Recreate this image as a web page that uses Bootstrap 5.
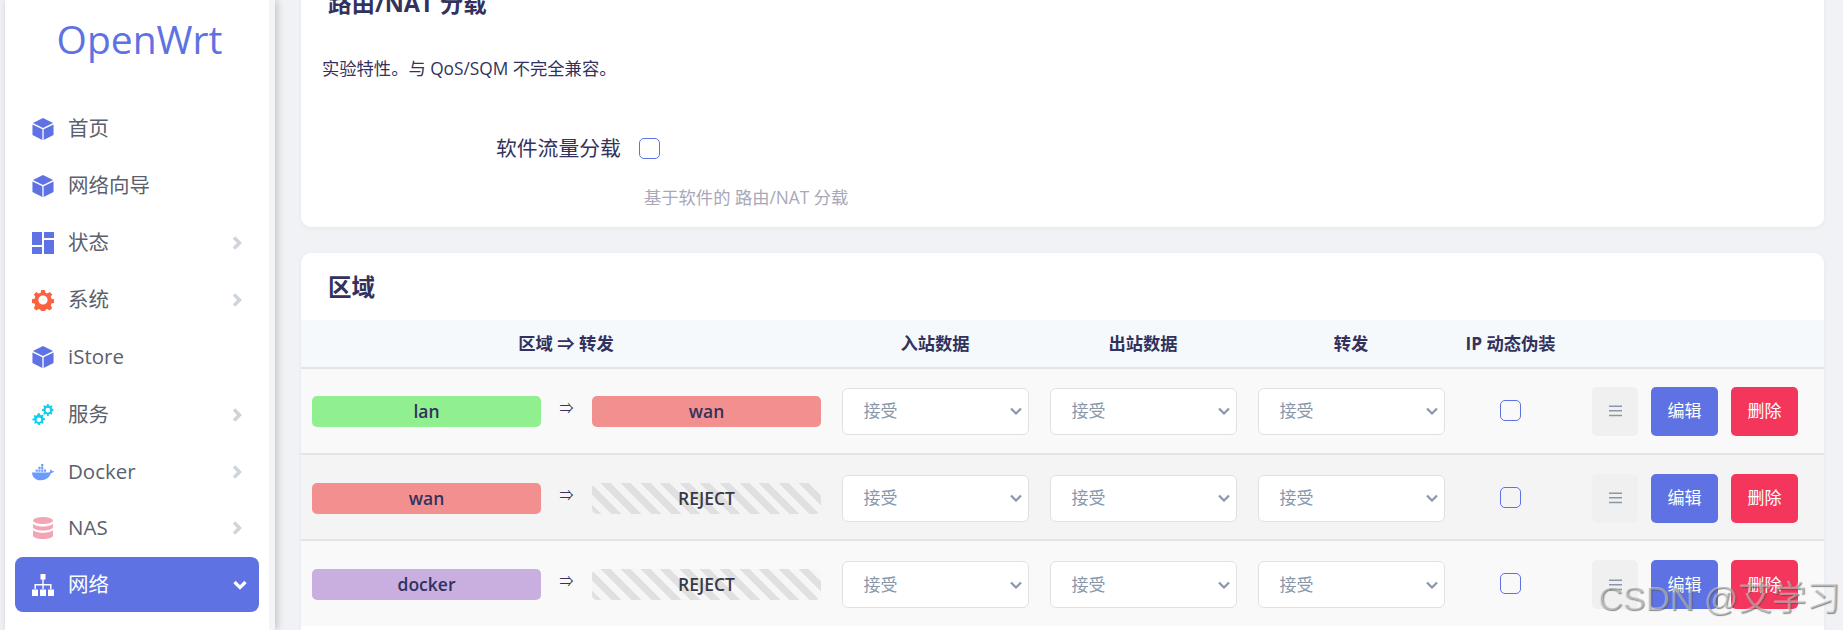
<!DOCTYPE html>
<html lang="zh"><head><meta charset="utf-8"><title>OpenWrt</title>
<link href="https://cdn.jsdelivr.net/npm/bootstrap@5.3.0/dist/css/bootstrap.min.css" rel="stylesheet">
<style>
html,body{height:630px;overflow:hidden}
body{background:#f1f2f5;font-family:"Open Sans","Noto Sans CJK SC",sans-serif;color:#32325d}
.shell{height:630px;overflow:hidden;padding-left:5px}
.side{width:270px;flex:none;height:630px;background:#fff;border-right:6px solid #f4f5f7;box-shadow:2px 0 8px rgba(0,0,0,.2);overflow:hidden;z-index:2}
.brand{font-size:39px;line-height:49px;color:#5e72e4;text-align:center;padding-top:14px;height:100px;padding-left:5px}
.menu{padding:0 10px;margin:0;list-style:none}
.mitem{height:57px;display:flex;align-items:center;padding:0 17px 0 17px;font-size:20.500px;color:#5b5f6e;border-radius:8px}
.mitem svg.ic{width:22px;height:22px;margin-right:14px;flex:none}
.mitem .chev{margin-left:auto;width:10px;height:14px;color:#ced4da}
.mitem.on{background:#5e72e4;color:#fff;height:55px;margin-top:1px}
.mitem.on .chev{width:14px;height:10px;color:#fff;margin-right:-5px}
.mitem.sub{height:58px;padding-left:53px;font-size:20px;border-radius:0}
.page{flex:1;min-width:0;padding:0 19px 0 26px;margin-top:-22px}
.pane{background:#fff;border:0;border-radius:10px;box-shadow:0 1px 4px rgba(50,50,93,.06)}
.pane-a{height:249px;padding:0 21px;margin-bottom:26px}
.ttl{font-size:23.500px;font-weight:700;line-height:30px;color:#32325d;margin:0}
.pane-a .ttl{padding:10px 6px 0}
.desc{font-size:17.300px;line-height:24px;margin:39px 0 0}
.frow{margin-top:54px;font-size:20.800px;display:flex;align-items:center;padding-left:174px;height:27px}
.box{appearance:none;-webkit-appearance:none;display:block;width:21px;height:21px;margin:0;border:1px solid #5e72e4;border-radius:5px;background:transparent}
.frow .box{margin-left:18px}
.hint{font-size:17.300px;color:#a8a8b9;line-height:24px;margin:24px 0 0 322px}
.pane-b{overflow:hidden;height:500px}
.pane-b .ttl{padding:19px 27px 18px}
.zones{table-layout:fixed;width:1523px;margin:0;border-collapse:collapse}
.zones th{background:#f6f9fc;height:48px;font-size:17.300px;font-weight:700;text-align:center;padding:0;color:#32325d;border-bottom:2px solid #e3e4e8;vertical-align:middle;box-shadow:none}
.zones td{height:86px;padding:0;border:0;border-bottom:2px solid #e3e4e8;vertical-align:middle;background:#f9f9f9;box-shadow:none;color:#32325d}
.zones tr.alt td,.zones tr.last td{padding-top:2px}
.zones tr.alt td{background:#f4f4f4}
.zones tr.last td{border-bottom:0}
.zcell{display:flex;align-items:center;padding:0 10px 0 11px}
.tagz{flex:none;width:229px;height:31px;line-height:31px;text-align:center;font-size:17.500px;font-weight:600;border-radius:5px;color:#32325d}
.g{background:#90f090}.r{background:#f29090}.p{background:#c9aee0}
.x{color:#3a3a46;background:repeating-linear-gradient(45deg,#e0e0e0 0 7px,#f4f4f4 7px 14px)}
tr.last .x{background:repeating-linear-gradient(45deg,#e0e0e0 0 7px,#f6f6f6 7px 14px)}
.arr{flex:1;text-align:center;font-size:14px;line-height:1;margin-top:-7px}
.pick{width:187px;height:47px;margin:0 auto;font-size:17px;color:#8898aa;padding:0 30px 0 21px;border:1px solid #dee2e6;border-radius:6px;background-color:#fff;background-image:url("data:image/svg+xml,%3csvg xmlns='http://www.w3.org/2000/svg' viewBox='0 0 12 8'%3e%3cpath fill='none' stroke='%238898aa' stroke-width='2.200' d='M1 1.500l5 5 5-5'/%3e%3c/svg%3e");background-position:right 6px center;background-size:12px 8px}
.cb-w{display:flex;justify-content:center;margin-top:-2px}
.acts{display:flex;justify-content:flex-end;gap:13px;padding-right:26px}
.acts .btn{height:49px;border:0;border-radius:5px;font-size:17px;color:#fff;padding:0;display:flex;align-items:center;justify-content:center}
.drag{width:46px;background:#f0f0f0!important;color:#8898aa!important}
.drag svg{width:13px;height:12px}
.ed{width:67px;background:#5e72e4!important}
.del{width:67px;background:#f5365c!important}
.mark-w{position:absolute;left:1598px;top:578px;font-family:"Liberation Sans","Noto Sans CJK SC",sans-serif;font-size:34px;line-height:40px;color:rgba(255,255,255,.4);text-shadow:1px 1px 1px rgba(80,80,80,.65);white-space:nowrap;z-index:5;pointer-events:none}
</style></head>
<body>
<div class="shell d-flex position-relative">
<aside class="side">
<div class="brand">OpenWrt</div>
<ul class="menu">
<li class="mitem"><svg class="ic" viewBox="0 0 24 24" fill="#5e72e4"><path d="M12 0l11 5.500L12 11 1 5.500zM.5 7l10.800 5.300V24L.5 18.500zM23.500 7v11.500L12.700 24V12.300z"/></svg>首页</li>
<li class="mitem"><svg class="ic" viewBox="0 0 24 24" fill="#5e72e4"><path d="M12 0l11 5.500L12 11 1 5.500zM.5 7l10.800 5.300V24L.5 18.500zM23.500 7v11.500L12.700 24V12.300z"/></svg>网络向导</li>
<li class="mitem"><svg class="ic" viewBox="0 0 22 22" fill="#5e72e4"><path d="M0 0h10v13H0zM12 0h10v6H12zM12 8h10v14H12zM0 15h10v7H0z"/></svg>状态<svg class="chev" viewBox="0 0 10 14" fill="none" stroke="currentColor" stroke-width="3.500"><path d="M2 1.500L7.500 7 2 12.500"/></svg></li>
<li class="mitem"><svg class="ic" viewBox="0 0 24 24" fill="#fb6340"><path fill-rule="evenodd" d="M10 1h4l.6 3 2.200.9 2.500-1.700 2.800 2.800-1.700 2.500.9 2.200 3 .6v4l-3 .6-.9 2.200 1.700 2.500-2.800 2.800-2.500-1.700-2.200.9-.6 3h-4l-.6-3-2.200-.9-2.500 1.700-2.800-2.800 1.700-2.500-.9-2.200-3-.6v-4l3-.6.9-2.200L2 6l2.800-2.800 2.500 1.700 2.200-.9zM12 7a5 5 0 100 10 5 5 0 000-10z"/></svg>系统<svg class="chev" viewBox="0 0 10 14" fill="none" stroke="currentColor" stroke-width="3.500"><path d="M2 1.500L7.500 7 2 12.500"/></svg></li>
<li class="mitem"><svg class="ic" viewBox="0 0 24 24" fill="#5e72e4"><path d="M12 0l11 5.500L12 11 1 5.500zM.5 7l10.800 5.300V24L.5 18.500zM23.500 7v11.500L12.700 24V12.300z"/></svg>iStore</li>
<li class="mitem" style="height:59px"><svg class="ic" viewBox="0 0 24 24" fill="#11cdef"><path fill-rule="evenodd" d="M7 10l1.500 0 .4 1.700 1.300.6 1.500-.9 1 1-.9 1.500.6 1.300 1.700.4v1.800l-1.700.4-.6 1.300.9 1.500-1 1-1.500-.9-1.300.6-.4 1.700H6.500l-.4-1.700-1.300-.6-1.500.9-1-1 .9-1.500-.6-1.300L.4 18v-1.800l1.700-.4.6-1.300-.9-1.500 1-1 1.500.9 1.300-.6.400-1.700zM7.500 14.600a2.500 2.500 0 100 5 2.500 2.500 0 000-5zM16.500 0h1.600l.4 1.700 1.300.6 1.500-.9 1 1-.9 1.500.6 1.300 1.500.4v1.800l-1.500.4-.6 1.300.9 1.500-1 1-1.500-.9-1.300.6-.4 1.700h-1.600l-.4-1.700-1.300-.6-1.500.9-1-1 .9-1.500-.6-1.300-1.700-.4V5.600l1.700-.4.6-1.300-.9-1.500 1-1 1.500.9 1.300-.6zM17.300 4.200a2.500 2.500 0 100 5 2.500 2.500 0 000-5z"/></svg>服务<svg class="chev" viewBox="0 0 10 14" fill="none" stroke="currentColor" stroke-width="3.500"><path d="M2 1.500L7.500 7 2 12.500"/></svg></li>
<li class="mitem" style="height:55px"><svg class="ic" viewBox="0 0 24 18" fill="#6a9bff"><path d="M0 9.500h19c.8-1 1-2.200.8-3.500 1 .4 1.700 1.200 2 2 .8-.3 1.500-.2 2.200.2-.6 1.300-1.800 2-3.200 2C19 15 15.500 18 9.500 18 3.500 18 .3 14.500 0 9.500z"/><path d="M4 6.300h2.300v2.400H4zM7 6.300h2.300v2.400H7zM10 6.300h2.300v2.400H10zM13 6.300h2.300v2.400H13zM7 3.300h2.300v2.400H7zM10 3.300h2.300v2.400H10zM10 .3h2.300v2.400H10z"/></svg>Docker<svg class="chev" viewBox="0 0 10 14" fill="none" stroke="currentColor" stroke-width="3.500"><path d="M2 1.500L7.500 7 2 12.500"/></svg></li>
<li class="mitem"><svg class="ic" viewBox="0 0 20 22" fill="#f3a4b5"><ellipse cx="10" cy="3.500" rx="10" ry="3.500"/><path d="M0 6.500c1 2 5 3 10 3s9-1 10-3V10c0 2-4.500 3.500-10 3.500S0 12 0 10zM0 12.800c1 2 5 3 10 3s9-1 10-3V18.500C20 20.500 15.500 22 10 22S0 20.500 0 18.500z"/></svg>NAS<svg class="chev" viewBox="0 0 10 14" fill="none" stroke="currentColor" stroke-width="3.500"><path d="M2 1.500L7.500 7 2 12.500"/></svg></li>
<li class="mitem on"><svg class="ic" viewBox="0 0 22 22" fill="#fff"><path d="M8.500 0h5v5.500h-5zM10.300 5.500h1.400V10H19.500v5H18v-3.500h-6.300V15h-1.400v-3.500H4V15H2.500v-5h7.800zM0 15.500h6V22H0zM8 15.500h6V22H8zM16 15.500h6V22h-6z"/></svg>网络<svg class="chev" viewBox="0 0 14 10" fill="none" stroke="currentColor" stroke-width="3.200"><path d="M1.500 2L7 7.500 12.500 2"/></svg></li>
<li class="mitem sub">接口</li>
</ul>
</aside>
<main class="page">
<section class="pane pane-a">
<h3 class="ttl">路由/NAT 分载</h3>
<p class="desc">实验特性。与 QoS/SQM 不完全兼容。</p>
<div class="frow"><span>软件流量分载</span><input class="box" type="checkbox" aria-label="软件流量分载"></div>
<p class="hint">基于软件的 路由/NAT 分载</p>
</section>
<section class="pane pane-b">
<h3 class="ttl">区域</h3>
<table class="table zones">
<colgroup><col style="width:530px"><col style="width:208px"><col style="width:208px"><col style="width:208px"><col style="width:111px"><col style="width:258px"></colgroup>
<thead><tr><th>区域 ⇒ 转发</th><th>入站数据</th><th>出站数据</th><th>转发</th><th>IP 动态伪装</th><th></th></tr></thead>
<tbody>
<tr><td><div class="zcell"><span class="tagz g">lan</span><span class="arr">⇒</span><span class="tagz r">wan</span></div></td>
<td><select class="form-select pick"><option>接受</option></select></td><td><select class="form-select pick"><option>接受</option></select></td><td><select class="form-select pick"><option>接受</option></select></td>
<td><div class="cb-w"><input class="box" type="checkbox"></div></td>
<td><div class="acts"><button class="btn drag"><svg viewBox="0 0 14 12" fill="currentColor"><path d="M0 0h14v1.600H0zM0 5h14v1.600H0zM0 10h14v1.600H0z"/></svg></button><button class="btn ed">编辑</button><button class="btn del">删除</button></div></td></tr>
<tr class="alt"><td><div class="zcell"><span class="tagz r">wan</span><span class="arr">⇒</span><span class="tagz x">REJECT</span></div></td>
<td><select class="form-select pick"><option>接受</option></select></td><td><select class="form-select pick"><option>接受</option></select></td><td><select class="form-select pick"><option>接受</option></select></td>
<td><div class="cb-w"><input class="box" type="checkbox"></div></td>
<td><div class="acts"><button class="btn drag"><svg viewBox="0 0 14 12" fill="currentColor"><path d="M0 0h14v1.600H0zM0 5h14v1.600H0zM0 10h14v1.600H0z"/></svg></button><button class="btn ed">编辑</button><button class="btn del">删除</button></div></td></tr>
<tr class="last"><td><div class="zcell"><span class="tagz p">docker</span><span class="arr">⇒</span><span class="tagz x">REJECT</span></div></td>
<td><select class="form-select pick"><option>接受</option></select></td><td><select class="form-select pick"><option>接受</option></select></td><td><select class="form-select pick"><option>接受</option></select></td>
<td><div class="cb-w"><input class="box" type="checkbox"></div></td>
<td><div class="acts"><button class="btn drag"><svg viewBox="0 0 14 12" fill="currentColor"><path d="M0 0h14v1.600H0zM0 5h14v1.600H0zM0 10h14v1.600H0z"/></svg></button><button class="btn ed">编辑</button><button class="btn del">删除</button></div></td></tr>
</tbody></table>
</section>
</main>
<div class="mark-w">CSDN @艾学习</div>
</div>
</body></html>
